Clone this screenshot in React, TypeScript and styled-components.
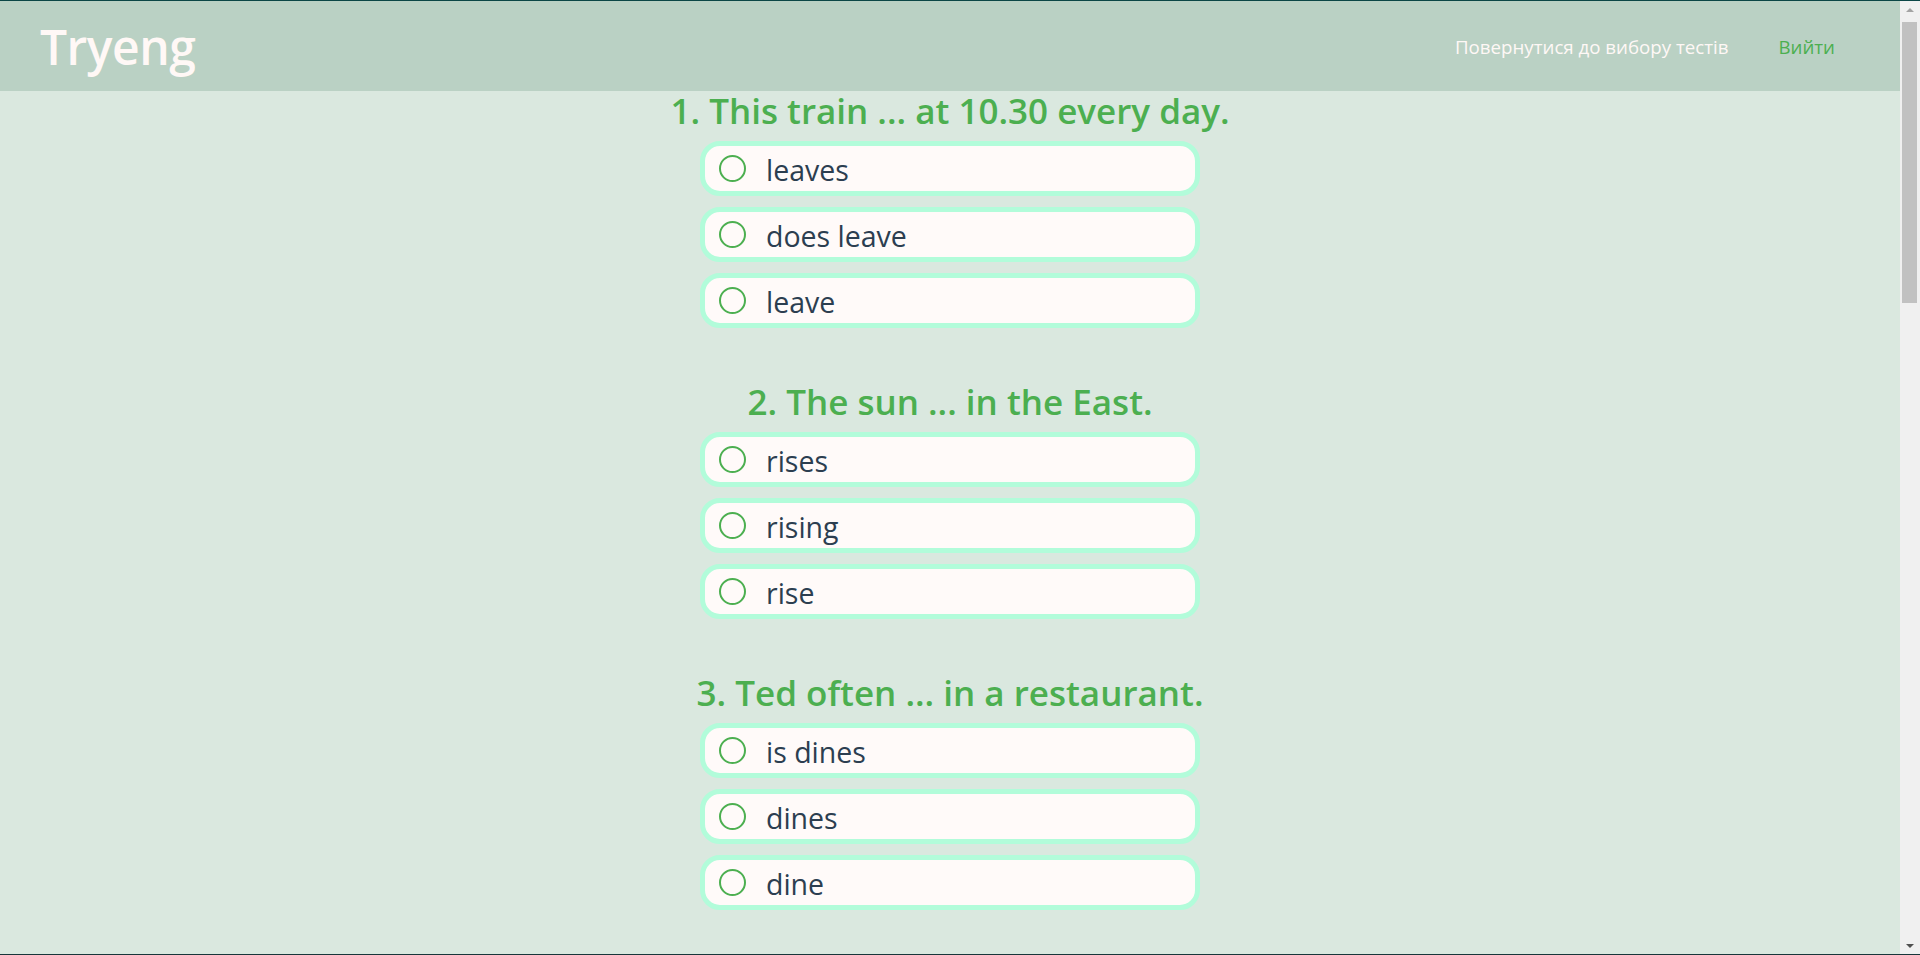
import React, { useState } from 'react';
import styled, { createGlobalStyle } from 'styled-components';

const GlobalStyle = createGlobalStyle`
	html, body {
		margin: 0;
		height: 100%;
		overflow: hidden;
	}
	body {
		background: #dae8df;
		font-family: 'Segoe UI', 'Open Sans', 'Noto Sans', sans-serif;
		color: #2c3e50;
	}
`

const Window = styled.div`
	box-sizing: border-box;
	height: 100vh;
	display: flex;
	border-top: 1px solid #0b4646;
	border-bottom: 1px solid #17363a;
	background: #dae8df;
`
const Content = styled.div`
	flex: 1;
	overflow-y: auto;
	scrollbar-width: none;
	&::-webkit-scrollbar {
		display: none;
	}
`
const ScrollBar = styled.div`
	width: 20px;
	display: flex;
	flex-direction: column;
	align-items: center;
	background: #f0f0f0;
`
const Arrow = styled.div<{ $down?: boolean }>`
	flex: none;
	height: 17px;
	width: 100%;
	display: flex;
	align-items: center;
	justify-content: center;
	&::after {
		content: '';
		border-left: 4px solid transparent;
		border-right: 4px solid transparent;
		${(p) => (p.$down ? 'border-top: 4px solid #505050;' : 'border-bottom: 4px solid #a3a3a3;')}
	}
`
const Track = styled.div`
	flex: 1;
	width: 100%;
	padding: 4px 3px 0 2px;
	box-sizing: border-box;
`
const Thumb = styled.div`
	height: 281px;
	background: #c1c1c1;
`
const Header = styled.header`
	height: 90px;
	display: flex;
	align-items: center;
	justify-content: space-between;
	padding: 0 65px 0 40px;
	background: #bad1c4;
`
const Logo = styled.h1`
	margin: 0;
	font-size: 48px;
	font-weight: 600;
	letter-spacing: -0.5px;
	color: #fff8f6;
`
const Nav = styled.nav`
	display: flex;
	align-items: center;
	gap: 50px;
`
const NavLink = styled.a<{ $accent?: boolean }>`
	font-size: 18.7px;
	color: ${(p) => (p.$accent ? '#4caf50' : '#fff8f6')};
	text-decoration: none;
	cursor: pointer;
`
const Main = styled.main`
	display: flex;
	flex-direction: column;
	align-items: center;
	padding-bottom: 60px;
`
const Question = styled.section`
	display: flex;
	flex-direction: column;
	align-items: center;
	gap: 11px;
	margin-bottom: 54px;
`
const Title = styled.h2`
	margin: 0 0 -1px;
	font-size: 35px;
	line-height: 40px;
	font-weight: 600;
	color: #4caf50;
	text-align: center;
`
const Option = styled.label`
	box-sizing: border-box;
	width: 500px;
	height: 55px;
	display: flex;
	align-items: center;
	gap: 20px;
	padding: 3px 14px 0;
	background: #fffaf9;
	border: 5px solid #b2fcda;
	border-radius: 20px;
	font-size: 28.5px;
	cursor: pointer;
`
const Radio = styled.input`
	appearance: none;
	flex: none;
	margin: -3px 0 0;
	width: 27px;
	height: 27px;
	border: 2px solid #4caf50;
	border-radius: 50%;
	background: #fffaf9;
	cursor: pointer;
	&:checked {
		background: radial-gradient(circle, #4caf50 45%, #fffaf9 50%);
	}
`
const Submit = styled.button`
	font-family: inherit;
	font-size: 24px;
	font-weight: 600;
	color: #fff8f6;
	background: #4caf50;
	border: none;
	border-radius: 20px;
	padding: 12px 48px;
	cursor: pointer;
`

const questions = [
	{ text: 'This train ... at 10.30 every day.', answers: ['leaves', 'does leave', 'leave'] },
	{ text: 'The sun ... in the East.', answers: ['rises', 'rising', 'rise'] },
	{ text: 'Ted often ... in a restaurant.', answers: ['is dines', 'dines', 'dine'] },
	{ text: '... you speak English?', answers: ['Do', 'Does', 'Are'] },
	{ text: 'She ... coffee in the morning.', answers: ['drinks', 'drink', 'is drink'] },
	{ text: 'My parents ... in London.', answers: ['lives', 'live', 'living'] },
	{ text: 'He ... like milk.', answers: ["don't", "doesn't", "isn't"] },
	{ text: 'We ... to school every day.', answers: ['goes', 'go', 'going'] },
	{ text: 'Water ... at 100 degrees.', answers: ['boil', 'boils', 'is boil'] },
	{ text: 'What time ... the shop open?', answers: ['do', 'does', 'is'] },
];

const App = () => {
	const [picked, setPicked] = useState<Record<number, string>>({});

	return (
		<Window>
			<GlobalStyle />
			<Content>
				<Header>
					<Logo>Tryeng</Logo>
					<Nav>
						<NavLink>Повернутися до вибору тестів</NavLink>
						<NavLink $accent>Вийти</NavLink>
					</Nav>
				</Header>
				<Main>
					{questions.map((q, i) => (
						<Question key={i}>
							<Title>{i + 1}. {q.text}</Title>
							{q.answers.map((a) => (
								<Option key={a}>
									<Radio
										type="radio"
										name={'q' + i}
										checked={picked[i] === a}
										onChange={() => setPicked({ ...picked, [i]: a })}
									/>
									{a}
								</Option>
							))}
						</Question>
					))}
					<Submit>Перевірити</Submit>
				</Main>
			</Content>
			<ScrollBar>
				<Arrow />
				<Track>
					<Thumb />
				</Track>
				<Arrow $down />
			</ScrollBar>
		</Window>
	);
};

export default App;
